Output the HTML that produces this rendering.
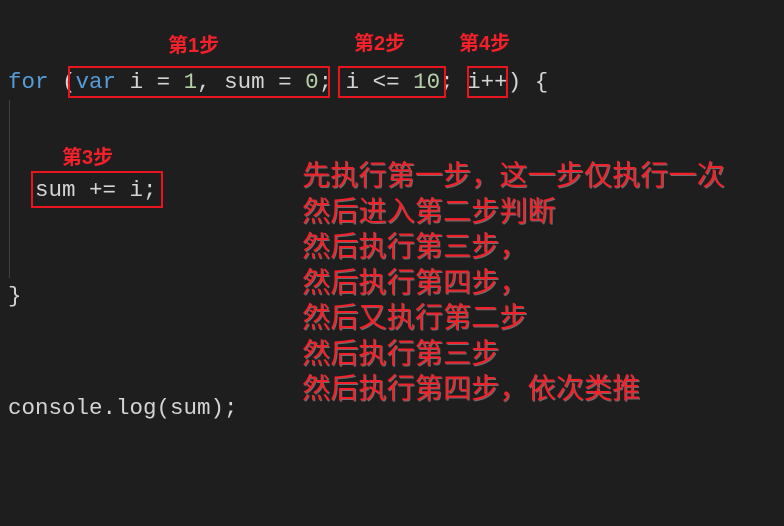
<!DOCTYPE html>
<html><head><meta charset="utf-8"><style>
html,body{margin:0;padding:0;}
body{width:784px;height:526px;background:#1e1e1e;position:relative;overflow:hidden;font-family:"Liberation Mono",monospace;}
.c{position:absolute;font-size:22.5px;line-height:30px;color:#d4d4d4;white-space:pre;}
.k{color:#569cd6}.n{color:#b5cea8}.v{color:#9cdcfe}.y{color:#d4d4d4}
.box{position:absolute;border:2px solid #e8141e;box-sizing:border-box;}
.lab{position:absolute;font-family:"Liberation Sans","Noto Sans CJK SC",sans-serif;color:#f4202a;font-size:20px;font-weight:bold;line-height:24px;white-space:nowrap;}
.t{position:absolute;left:302px;font-family:"Liberation Sans","Noto Sans CJK SC",sans-serif;color:#f4202a;font-size:28.2px;line-height:35.5px;white-space:pre;font-weight:normal;text-shadow:1px 1px 0 rgba(255,255,255,.35);}
</style></head><body>
<div style="position:absolute;left:9px;top:100px;width:1px;height:178px;background:#404040"></div>
<div class="c" style="left:8px;top:67px"><span class="k">for</span> <span class="y">(</span><span class="k">var</span> i = <span class="n">1</span>, sum = <span class="n">0</span>; i &lt;= <span class="n">10</span>; i++<span class="y">)</span> {</div>
<div class="c" style="left:35px;top:175px">sum += i;</div>
<div class="c" style="left:8px;top:281px">}</div>
<div class="c" style="left:8px;top:393px">console.log(sum);</div>
<div class="box" style="left:68px;top:66px;width:262px;height:32px"></div>
<div class="box" style="left:338px;top:66px;width:108px;height:32px"></div>
<div class="box" style="left:467px;top:66px;width:41px;height:32px"></div>
<div class="box" style="left:31px;top:171px;width:132px;height:37px"></div>
<div class="lab" style="left:168px;top:34px">第1步</div>
<div class="lab" style="left:354px;top:32px">第2步</div>
<div class="lab" style="left:459px;top:32px">第4步</div>
<div class="lab" style="left:62px;top:146px">第3步</div>
<div class="t" style="top:158px">先执行第一步，这一步仅执行一次
然后进入第二步判断
然后执行第三步，
然后执行第四步，
然后又执行第二步
然后执行第三步
然后执行第四步，依次类推</div>
</body></html>
